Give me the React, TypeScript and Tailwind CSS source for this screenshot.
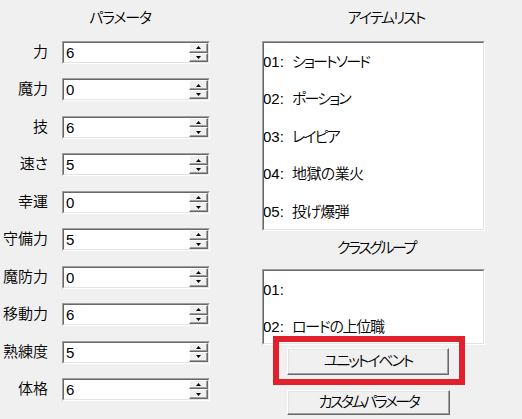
import React from "react";

const params: [string, string][] = [
  ["力", "6"],
  ["魔力", "0"],
  ["技", "6"],
  ["速さ", "5"],
  ["幸運", "0"],
  ["守備力", "5"],
  ["魔防力", "0"],
  ["移動力", "6"],
  ["熟練度", "5"],
  ["体格", "6"],
];

const items: [string, string, string][] = [
  ["01:", "ショートソード", "tracking-[-1.9px]"],
  ["02:", "ポーション", "tracking-[-1.9px]"],
  ["03:", "レイピア", "tracking-[-1.9px]"],
  ["04:", "地獄の業火", "tracking-[-0.6px]"],
  ["05:", "投げ爆弾", "tracking-[-0.8px]"],
];

const classes: [string, string, string][] = [
  ["01:", "", ""],
  ["02:", "ロードの上位職", "tracking-[-1.3px]"],
];

function Tri({ up }: { up: boolean }) {
  return (
    <svg width="5" height="3" viewBox="0 0 5 3" className="block">
      {up ? <polygon points="2.5,0 5,3 0,3" fill="#000" /> : <polygon points="0,0 5,0 2.5,3" fill="#000" />}
    </svg>
  );
}

function SpinBtn({ up }: { up: boolean }) {
  return (
    <div className="flex-1 flex items-center justify-center bg-[#f0f0f0] border border-t-white border-l-white border-r-[#696969] border-b-[#696969] shadow-[inset_-1px_-1px_0_#a0a0a0]">
      <Tri up={up} />
    </div>
  );
}

function Spin({ value }: { value: string }) {
  return (
    <div className="w-[148px] h-[23px] border border-t-[#a0a0a0] border-l-[#a0a0a0] border-r-white border-b-white">
      <div className="w-full h-full flex bg-white border border-t-[#696969] border-l-[#696969] border-r-[#e3e3e3] border-b-[#e3e3e3]">
        <div className="flex-1 flex items-center pl-[2px] leading-none">{value}</div>
        <div className="w-[19px] flex flex-col">
          <SpinBtn up />
          <SpinBtn up={false} />
        </div>
      </div>
    </div>
  );
}

function ListBox({ rows, h }: { rows: [string, string, string][]; h: string }) {
  return (
    <div className={`w-[223px] ${h} border border-t-[#a0a0a0] border-l-[#a0a0a0] border-r-white border-b-white`}>
      <div className="w-full h-full bg-white border border-t-[#696969] border-l-[#696969] border-r-[#e3e3e3] border-b-[#e3e3e3] flex flex-col overflow-hidden">
        {rows.map(([n, t, tr]) => (
          <div key={n} className="h-[37.5px] shrink-0 flex items-center -ml-[1px]">
            <span className="w-[29px]">{n}</span>
            <span className={`whitespace-nowrap ${tr}`}>{t}</span>
          </div>
        ))}
      </div>
    </div>
  );
}

function WinButton({ label, w, h, tr }: { label: string; w: string; h: string; tr: string }) {
  return (
    <div className={`${w} ${h} bg-[#f0f0f0] border border-t-white border-l-white border-r-[#696969] border-b-[#696969] shadow-[inset_-1px_-1px_0_#a0a0a0,inset_1px_1px_0_#e3e3e3] flex items-center justify-center`}>
      <span className={`whitespace-nowrap ${tr}`}>{label}</span>
    </div>
  );
}

export default function App() {
  return (
    <div
      className="w-[522px] h-[419px] bg-[#f0f0f0] flex overflow-hidden text-[15px] font-[350] text-black [font-feature-settings:'palt']"
      style={{ fontFamily: '"Liberation Sans", "Noto Sans CJK JP", sans-serif' }}
    >
      {/* Left column */}
      <div className="w-[262px] flex flex-col">
        <div className="h-[41px] w-[240px] flex items-center justify-center pb-[4px]">
          <span className="tracking-[-1.2px]">パラメータ</span>
        </div>
        <div className="flex flex-col gap-[14.45px]">
          {params.map(([label, v]) => (
            <div key={label} className="flex items-center h-[23px]">
              <div className="w-[48px] text-right leading-none whitespace-nowrap -mt-[2px]">{label}</div>
              <div className="ml-[14px]">
                <Spin value={v} />
              </div>
            </div>
          ))}
        </div>
      </div>

      {/* Right column */}
      <div className="w-[223px] flex flex-col">
        <div className="h-[41px] flex items-center justify-center pl-[25px] pb-[4px]">
          <span className="tracking-[-2px]">アイテムリスト</span>
        </div>
        <ListBox rows={items} h="h-[190px]" />
        <div className="h-[38px] flex items-center justify-center pl-[5px] pb-[4px]">
          <span className="tracking-[-2.4px]">クラスグループ</span>
        </div>
        <ListBox rows={classes} h="h-[76px]" />
        <div className="relative ml-[25px] mt-[3px] w-[162px]">
          <WinButton label="ユニットイベント" w="w-[162px]" h="h-[27px]" tr="tracking-[-2.1px]" />
          <div className="absolute -left-[14px] -top-[12px] w-[192px] h-[49px] border-[6px] border-[#e0212b] pointer-events-none" />
        </div>
        <div className="ml-[25px] mt-[15px]">
          <WinButton label="カスタムパラメータ" w="w-[163px]" h="h-[25px]" tr="tracking-[-2.5px]" />
        </div>
      </div>
    </div>
  );
}
